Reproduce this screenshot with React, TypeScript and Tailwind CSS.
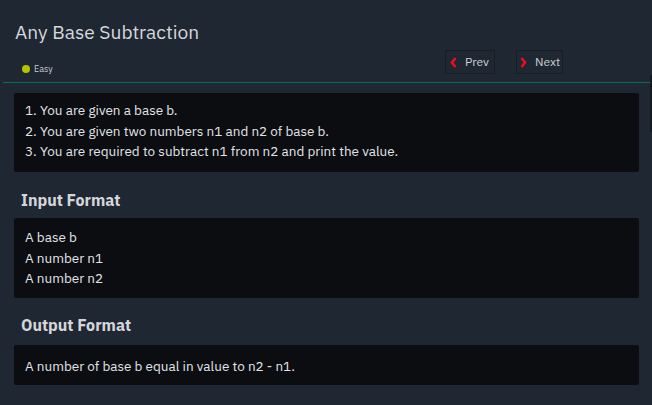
import React from 'react';

const font = { fontFamily: '"IBM Plex Sans", "Open Sans", "Noto Sans", sans-serif' };

const NavButton: React.FC<{ label: string; dir: 'left' | 'right'; className: string }> = ({ label, dir, className }) => (
  <button className={`flex items-center gap-[8px] h-[24px] border border-[#171d25] text-[12px] text-[#cdd0d5] ${className}`}>
    <svg className="w-[7px] h-[11px]" viewBox="0 0 7 11" fill="none" stroke="#e5101b" strokeWidth={2.6}>
      {dir === 'left' ? <path d="M5.5 1 L2 5.5 L5.5 10" /> : <path d="M1.5 1 L5 5.5 L1.5 10" />}
    </svg>
    {label}
  </button>
);

const Box: React.FC<{ children: React.ReactNode; className?: string }> = ({ children, className }) => (
  <div className={`bg-[#0b0d11] rounded-[2px] px-[11px] text-[13.5px] leading-[20.5px] text-[#e2e4e8] ${className ?? ''}`}>
    {children}
  </div>
);

export default function App() {
  return (
    <div className="w-[652px] h-[405px] bg-[#1f2733] relative overflow-hidden" style={font}>
      <div className="absolute right-0 top-[75px] w-[2px] h-[57px] bg-[#141a22]" />
      <div className="px-[15px] pt-[19px]">
        <h1 className="text-[19.2px] leading-[26px] text-[#d6d8dc]">Any Base Subtraction</h1>
      </div>
      <div className="flex items-start justify-between pl-[22px] pr-[89px] mt-[5px] h-[32px]">
        <div className="flex items-center gap-[4px] mt-[13px] h-[12px]">
          <span className="w-[8px] h-[8px] rounded-full bg-[#b5c400]" />
          <span className="text-[9px] leading-[12px] text-[#c9ccd1]">Easy</span>
        </div>
        <div className="flex gap-[21px]">
          <NavButton label="Prev" dir="left" className="w-[50px] pl-[4px]" />
          <NavButton label="Next" dir="right" className="w-[47px] pl-[3px]" />
        </div>
      </div>
      <div className="ml-[3px] mr-[2px] h-[1px] bg-[#0c6b62]" />
      <div className="pl-[14px] pr-[13px] pt-[10px]">
        <Box className="py-[7px] h-[79px]">
          <div>1. You are given a base b.</div>
          <div>2. You are given two numbers n1 and n2 of base b.</div>
          <div>3. You are required to subtract n1 from n2 and print the value.</div>
        </Box>
        <h2 className="text-[16px] font-bold text-[#d4d6da] pl-[7px] pt-[17px] pb-[7px] leading-[22px]">Input Format</h2>
        <Box className="py-[9px] h-[80px]">
          <div>A base b</div>
          <div>A number n1</div>
          <div>A number n2</div>
        </Box>
        <h2 className="text-[16px] font-bold text-[#d4d6da] pl-[7px] pt-[16px] pb-[9px] leading-[22px]">Output Format</h2>
        <Box className="pt-[11px] h-[40px]">
          <div>A number of base b equal in value to n2 - n1.</div>
        </Box>
      </div>
    </div>
  );
}
